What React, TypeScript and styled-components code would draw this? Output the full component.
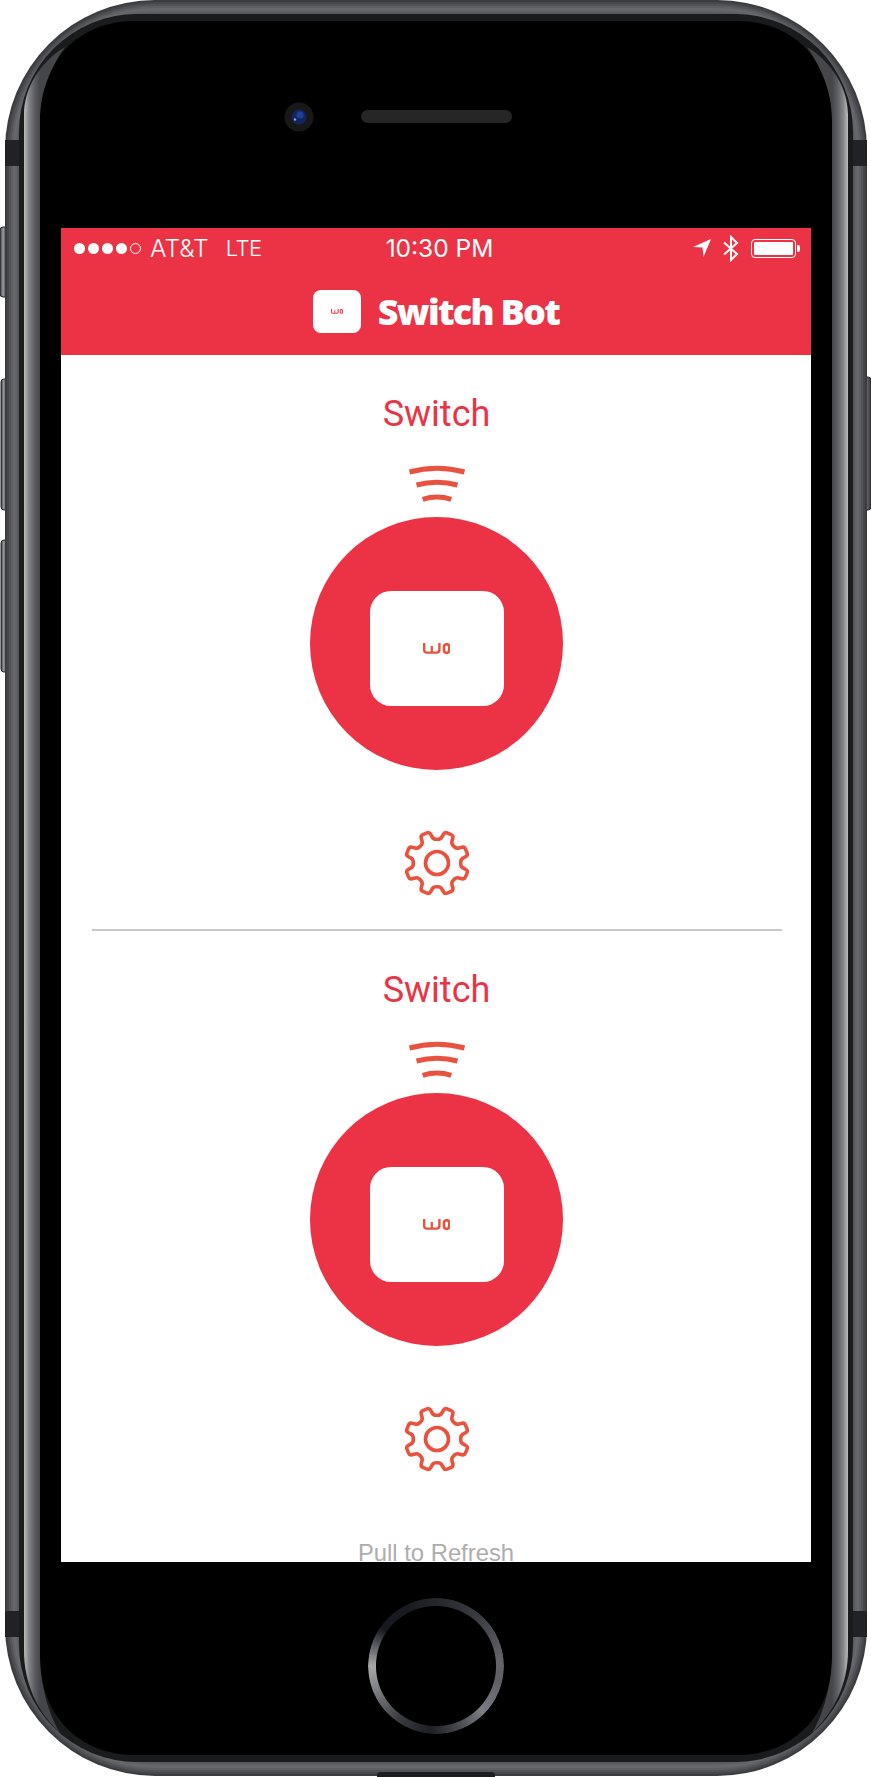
import React from "react";
import styled, { createGlobalStyle } from "styled-components";

const RED = "#ec3345";
const ACCENT = "#e8533f";

const Global = createGlobalStyle`
  html, body { margin: 0; padding: 0; background: #fff; }
`;

const Device = styled.div`
  position: relative;
  width: 871px;
  height: 1777px;
  padding: 228px 60px 215px 61px;
  box-sizing: border-box;
  overflow: hidden;
  background: #fff;
`;

const Chassis = styled.svg`
  position: absolute;
  inset: 0;
`;

const Screen = styled.main`
  position: relative;
  display: flex;
  flex-direction: column;
  width: 750px;
  height: 1334px;
  overflow: hidden;
  background: #fff;
  font-family: "Liberation Sans", Arial, sans-serif;
`;

const Header = styled.header`
  display: flex;
  flex-direction: column;
  flex: none;
  height: 127px;
  background: ${RED};
  color: #fff;
`;

const StatusBar = styled.div`
  display: grid;
  grid-template-columns: 1fr auto 1fr;
  align-items: center;
  height: 40px;
  padding: 0 11px 0 13px;
  font-family: Inter, "Liberation Sans", sans-serif;
  font-weight: 300;
  font-size: 24.5px;
`;

const Carrier = styled.div`
  display: flex;
  align-items: center;
`;

const Dot = styled.span<{ $empty?: boolean }>`
  width: 11px;
  height: 11px;
  margin-right: 3px;
  border-radius: 50%;
  box-sizing: border-box;
  background: ${(p) => (p.$empty ? "transparent" : "#fff")};
  border: ${(p) => (p.$empty ? "1px solid #fff" : "none")};
`;

const CarrierName = styled.span`
  margin-left: 6px;
`;

const Network = styled.span`
  margin-left: 17px;
  font-size: 22px;
  letter-spacing: -0.5px;
`;

const Clock = styled.div`
  padding-left: 5px;
  font-weight: 400;
  text-align: center;
`;

const StatusIcons = styled.div`
  display: flex;
  align-items: center;
  justify-content: flex-end;
  gap: 12px;
`;

const Battery = styled.div`
  position: relative;
  width: 45px;
  height: 19px;
  margin-right: 4px;
  padding: 2px;
  box-sizing: border-box;
  border: 1px solid #fff;
  border-radius: 4px;
  &::before {
    content: "";
    display: block;
    height: 100%;
    background: #fff;
    border-radius: 1px;
  }
  &::after {
    content: "";
    position: absolute;
    top: 5px;
    right: -5px;
    width: 3px;
    height: 7px;
    background: #fff;
    border-radius: 0 2px 2px 0;
  }
`;

const Brand = styled.div`
  display: flex;
  align-items: center;
  justify-content: center;
  gap: 17px;
  margin-top: 22px;
`;

const BrandTile = styled.div`
  display: flex;
  align-items: center;
  justify-content: center;
  width: 48px;
  height: 43px;
  background: #fff;
  border-radius: 8px;
`;

const BrandName = styled.h1`
  margin: 0;
  font-family: "Open Sans", Lato, sans-serif;
  font-weight: 800;
  font-size: 36px;
  line-height: 43px;
  letter-spacing: -1.7px;
  color: #fff;
`;

const SwitchSection = styled.section`
  flex: none;
  display: flex;
  flex-direction: column;
  align-items: center;
  height: 576px;
  padding: 39px 0 0 1px;
  box-sizing: border-box;
`;

const DeviceTitle = styled.h2`
  margin: 0 0 30px;
  font-family: Roboto, "Liberation Sans", sans-serif;
  font-weight: 400;
  font-size: 36px;
  line-height: 40px;
  color: ${RED};
`;

const WaveIcon = styled.svg`
  display: block;
  flex: none;
  margin-bottom: 13px;
`;

const Bot = styled.div`
  display: flex;
  align-items: center;
  justify-content: center;
  flex: none;
  width: 253px;
  height: 253px;
  border-radius: 50%;
  background: ${RED};
`;

const BotFace = styled.div`
  display: flex;
  align-items: center;
  justify-content: center;
  width: 134px;
  height: 115px;
  margin-top: 9px;
  border-radius: 21px;
  background: #fff;
`;

const GearIcon = styled.svg`
  display: block;
  flex: none;
  margin-top: 59px;
`;

const Divider = styled.hr`
  flex: none;
  width: 690px;
  height: 2px;
  margin: 32px 0 0;
  border: 0;
  background: #c8c8c8;
`;

const PullHint = styled.div`
  margin-top: 33px;
  text-align: center;
  font-size: 23.8px;
  line-height: 26px;
  color: #adadad;
`;

const HomeButton = styled.div`
  position: absolute;
  left: 368px;
  top: 1598px;
  width: 136px;
  height: 136px;
  border-radius: 50%;
  background: conic-gradient(
    from 0deg,
    #26272c 0deg,
    #3a3b41 40deg,
    #63646a 85deg,
    #5f6066 105deg,
    #7d7e83 135deg,
    #46474c 160deg,
    #1e1f24 185deg,
    #3a3b3f 215deg,
    #78797c 245deg,
    #a9a9a9 270deg,
    #6a6a6f 285deg,
    #16171f 305deg,
    #1a1b22 335deg,
    #26272c 360deg
  );
  -webkit-mask: radial-gradient(circle closest-side, transparent 59.5px, #000 60.5px);
  mask: radial-gradient(circle closest-side, transparent 59.5px, #000 60.5px);
`;

/* Brand mark: a stroked "w" followed by an "o" */
const Mark = ({ width, color }: { width: number; color: string }) => (
  <svg width={width} height={(width * 11) / 27.5} viewBox="0 0 27.5 11" fill="none" stroke={color}>
    <path d="M1.2 0V7Q1.2 9.600 3.800 9.600H13.800Q16.400 9.600 16.400 7V0" strokeWidth="2.4" />
    <path d="M8.800 3V9" strokeWidth="2.200" />
    <rect x="21" y="1.200" width="5.200" height="8.600" rx="2.600" strokeWidth="2.600" />
  </svg>
);

const gearPath = (() => {
  const c = 34;
  const pts: [number, number][] = [];
  for (let k = 0; k < 8; k++) {
    const a = ((22.5 + 45 * k) * Math.PI) / 180;
    const at = (r: number, d: number): [number, number] => [
      c + r * Math.sin(a + (d * Math.PI) / 180),
      c - r * Math.cos(a + (d * Math.PI) / 180),
    ];
    pts.push(at(24, -14), at(32, -8.5), at(32, 8.5), at(24, 14));
  }
  const n = pts.length;
  const trim = 2.6;
  let d = "";
  pts.forEach((p, i) => {
    const prev = pts[(i - 1 + n) % n];
    const next = pts[(i + 1) % n];
    const toward = (q: [number, number]) => {
      const dx = q[0] - p[0];
      const dy = q[1] - p[1];
      const l = Math.hypot(dx, dy);
      const t = Math.min(trim, l / 2);
      return [p[0] + (dx / l) * t, p[1] + (dy / l) * t];
    };
    const a = toward(prev);
    const b = toward(next);
    d += `${i === 0 ? "M" : "L"}${a[0].toFixed(2)} ${a[1].toFixed(2)}Q${p[0].toFixed(2)} ${p[1].toFixed(2)} ${b[0].toFixed(2)} ${b[1].toFixed(2)}`;
  });
  return d + "Z";
})();

const SwitchCard = ({ divided }: { divided?: boolean }) => (
  <SwitchSection>
    <DeviceTitle>Switch</DeviceTitle>
    <WaveIcon width="60" height="40" viewBox="0 0 60 40" fill="none" stroke={ACCENT} strokeWidth="5">
      <path d="M2.500 8Q30 .6 57.500 8" />
      <path d="M9.500 21Q30 15.600 50.500 21" />
      <path d="M15.700 35.300Q30 30.700 44.300 35.300" />
    </WaveIcon>
    <Bot>
      <BotFace>
        <Mark width={27.5} color={ACCENT} />
      </BotFace>
    </Bot>
    <GearIcon width="68" height="68" viewBox="0 0 68 68" fill="none" stroke={ACCENT} strokeWidth="3.600">
      <path d={gearPath} strokeLinejoin="round" />
      <circle cx="34" cy="34" r="11.500" />
    </GearIcon>
    {divided && <Divider />}
  </SwitchSection>
);

const bodyRings = [
  { inset: 0, fill: "#3b3c40" },
  { inset: 2, fill: "#46474b" },
  { inset: 4, fill: "#525357" },
  { inset: 6, fill: "#5e5f63" },
  { inset: 8, fill: "#67686c" },
  { inset: 10, fill: "#626367" },
  { inset: 12, fill: "#58595d" },
];

const sideKeys = [
  { x: 0, y: 227, w: 9, h: 70 },
  { x: 1, y: 379, w: 8, h: 131 },
  { x: 1, y: 540, w: 8, h: 132 },
  { x: 863, y: 377, w: 8, h: 133 },
];

const bands = [
  { y: 140, h: 26 },
  { y: 1611, h: 26 },
];

const glassLeft =
  "M24 115C24 88 40 62 65 47C52 66 40 90 40 120V1655C40 1685 49 1715 60 1733C38 1712 24 1685 24 1650Z";

const Phone = () => (
  <Chassis width="871" height="1777" viewBox="0 0 871 1777" aria-hidden="true">
    <defs>
      <linearGradient id="key" x1="0" x2="1" y1="0" y2="0">
        <stop offset="0" stopColor="#3a3b3f" />
        <stop offset=".35" stopColor="#9a9ba0" />
        <stop offset=".6" stopColor="#55565a" />
        <stop offset="1" stopColor="#3a3b3f" />
      </linearGradient>
      <linearGradient id="glassL" x1="24" x2="40" y1="0" y2="0" gradientUnits="userSpaceOnUse">
        <stop offset="0" stopColor="#bcbcbc" />
        <stop offset=".3" stopColor="#85868a" />
        <stop offset=".65" stopColor="#5e5f63" />
        <stop offset="1" stopColor="#45464a" />
      </linearGradient>
    </defs>
    {sideKeys.map((k) => (
      <rect key={k.y + k.x} x={k.x} y={k.y} width={k.w} height={k.h} rx="3" fill="url(#key)" stroke="#26272a" strokeWidth="1" />
    ))}
    {bodyRings.map((r) => (
      <rect
        key={r.inset}
        x={5 + r.inset}
        y={r.inset}
        width={862 - 2 * r.inset}
        height={1776 - 2 * r.inset}
        rx={150 - r.inset}
        fill={r.fill}
      />
    ))}
    {bands.map((b) => (
      <g key={b.y} fill="#202226">
        <rect x="5" y={b.y} width="14" height={b.h} />
        <rect x="853" y={b.y} width="14" height={b.h} />
      </g>
    ))}
    <rect x="19" y="14" width="834" height="1748" rx="118" fill="#1a1b1d" />
    <path d="M40 118C40 62 78 21 135 21H737C794 21 832 62 832 118V1658C832 1714 794 1755 737 1755H135C78 1755 40 1714 40 1658Z" fill="#000" />
    <path d={glassLeft} fill="url(#glassL)" />
    <path d={glassLeft} fill="url(#glassL)" transform="matrix(-1 0 0 1 872 0)" />
    <rect x="377" y="1772" width="118" height="8" rx="4" fill="#1c1d1f" />
    <circle cx="299" cy="117" r="14.500" fill="#181818" />
    <circle cx="299" cy="117" r="7.500" fill="#12265e" />
    <circle cx="300" cy="115" r="3.500" fill="#1f3f9a" />
    <circle cx="295" cy="119.500" r="1.200" fill="#8aa0c0" />
    <rect x="361" y="110" width="151" height="13" rx="6.500" fill="#262626" />
  </Chassis>
);

export default function App() {
  return (
    <Device>
      <Global />
      <Phone />
      <Screen>
        <Header>
          <StatusBar>
            <Carrier>
              <Dot />
              <Dot />
              <Dot />
              <Dot />
              <Dot $empty />
              <CarrierName>AT&amp;T</CarrierName>
              <Network>LTE</Network>
            </Carrier>
            <Clock>10:30 PM</Clock>
            <StatusIcons>
              <svg width="18" height="18" viewBox="0 0 18 18" fill="#fff">
                <path d="M0 8L18 0L10.500 18L9.500 8.500Z" />
              </svg>
              <svg width="16" height="27" viewBox="0 0 16 27" fill="none" stroke="#fff" strokeWidth="2">
                <path d="M1 7.500L14 19L8 25V2L14 8L1 19.500" />
              </svg>
              <Battery />
            </StatusIcons>
          </StatusBar>
          <Brand>
            <BrandTile>
              <Mark width={12} color={RED} />
            </BrandTile>
            <BrandName>Switch Bot</BrandName>
          </Brand>
        </Header>
        <SwitchCard divided />
        <SwitchCard />
        <PullHint>Pull to Refresh</PullHint>
      </Screen>
      <HomeButton />
    </Device>
  );
}
